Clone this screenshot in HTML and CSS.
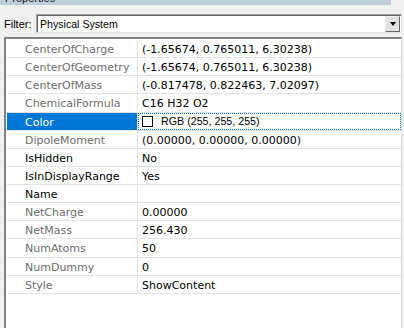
FILE: index.html
```html
<!DOCTYPE html>
<html lang="en">
<head>
    <meta charset="UTF-8">
    <title>Properties</title>
    <link rel="stylesheet" href="styles.css">
</head>
<body>
    <!-- Titulo do painel -->
    <div class="title-bar"><span class="title-text">Properties</span></div>

    <!-- Filtro -->
    <div class="filter-row">
        <span class="filter-label">Filter:</span>
        <div class="combo">
            <span class="combo-text">Physical System</span>
            <span class="combo-btn"><span class="combo-arrow"></span></span>
        </div>
    </div>

    <!-- Grade de propriedades -->
    <div class="prop-grid">
        <div class="prop-row"><div class="prop-name">CenterOfCharge</div><div class="prop-value">(-1.65674, 0.765011, 6.30238)</div></div>
        <div class="prop-row"><div class="prop-name">CenterOfGeometry</div><div class="prop-value">(-1.65674, 0.765011, 6.30238)</div></div>
        <div class="prop-row"><div class="prop-name">CenterOfMass</div><div class="prop-value">(-0.817478, 0.822463, 7.02097)</div></div>
        <div class="prop-row"><div class="prop-name">ChemicalFormula</div><div class="prop-value">C16 H32 O2</div></div>
        <div class="prop-row selected">
            <div class="prop-name">Color</div>
            <div class="prop-value focus"><span class="swatch"></span><span class="rgb-text">RGB (255, 255, 255)</span></div>
        </div>
        <div class="prop-row"><div class="prop-name">DipoleMoment</div><div class="prop-value">(0.00000, 0.00000, 0.00000)</div></div>
        <div class="prop-row"><div class="prop-name editable">IsHidden</div><div class="prop-value">No</div></div>
        <div class="prop-row"><div class="prop-name editable">IsInDisplayRange</div><div class="prop-value">Yes</div></div>
        <div class="prop-row"><div class="prop-name editable">Name</div><div class="prop-value"></div></div>
        <div class="prop-row"><div class="prop-name">NetCharge</div><div class="prop-value">0.00000</div></div>
        <div class="prop-row"><div class="prop-name">NetMass</div><div class="prop-value">256.430</div></div>
        <div class="prop-row"><div class="prop-name">NumAtoms</div><div class="prop-value">50</div></div>
        <div class="prop-row"><div class="prop-name">NumDummy</div><div class="prop-value">0</div></div>
        <div class="prop-row"><div class="prop-name">Style</div><div class="prop-value">ShowContent</div></div>
    </div>
</body>
</html>
```

FILE: styles.css
```css
* {
    margin: 0;
    padding: 0;
    box-sizing: border-box;
}

body {
    background-color: #f0f0f0;
    width: 404px;
    height: 328px;
    overflow: hidden;
    font-family: 'Liberation Sans', Arial, sans-serif;
    font-size: 11px;
}

/* Titulo */
.title-bar {
    width: 391px;
    height: 5px;
    background-color: #bfcddb;
    overflow: hidden;
    padding-left: 5px;
}

.title-text {
    display: block;
    margin-top: -9px;
    line-height: 14px;
    color: #1e1e1e;
}

/* Filtro */
.filter-row {
    display: flex;
    align-items: center;
    margin-top: 9px;
    padding-left: 4px;
}

.filter-label {
    width: 32px;
    color: #000;
}

.combo {
    display: flex;
    align-items: center;
    width: 366px;
    height: 19px;
    background-color: #fff;
    border: 1px solid;
    border-color: #a0a0a0 #e3e3e3 #e3e3e3 #a0a0a0;
    box-shadow: inset 1px 1px 0 #696969;
    padding: 1px 1px 1px 3px;
}

.combo-text {
    flex: 1;
    font-size: 10.6px;
    color: #000;
}

.combo-btn {
    display: flex;
    align-items: center;
    justify-content: center;
    width: 15px;
    height: 16px;
    background-color: #e1e1e1;
    border: 1px solid;
    border-color: #f0f0f0 #696969 #696969 #f0f0f0;
}

.combo-arrow {
    width: 0;
    height: 0;
    border-left: 3.5px solid transparent;
    border-right: 3.5px solid transparent;
    border-top: 4px solid #000;
}

/* Grade */
.prop-grid {
    margin: 4px 0 0 4px;
    width: 398px;
    height: 300px;
    background-color: #fff;
    border-top: 2px solid #828282;
    border-left: 2px solid #828282;
    border-right: 1px solid #dcdcdc;
    padding: 1px 0 0 1px;
    font-family: 'DejaVu Sans', sans-serif;
    font-size: 11px;
}

.prop-row {
    display: flex;
    height: 18.14px;
    border-bottom: 1px solid #e3e3e3;
    line-height: 17px;
}

.prop-name {
    width: 131px;
    padding-left: 18px;
    padding-top: 1px;
    border-right: 1px solid #e3e3e3;
    color: #6d6d6d;
    white-space: nowrap;
}

.prop-name.editable {
    color: #000;
}

.prop-value {
    flex: 1;
    padding-left: 4px;
    padding-top: 1px;
    color: #000;
    white-space: nowrap;
}

.selected .prop-name {
    background-color: #0078d7;
    color: #fff;
}

.prop-value.focus {
    display: flex;
    align-items: center;
    gap: 8px;
    padding-top: 0;
    outline: 1px dotted #0078d7;
    outline-offset: -1px;
}

.swatch {
    width: 11px;
    height: 11px;
    background-color: #fff;
    border: 1px solid #000;
}

.rgb-text {
    font-family: 'Liberation Sans', Arial, sans-serif;
    font-size: 10.7px;
}
```
